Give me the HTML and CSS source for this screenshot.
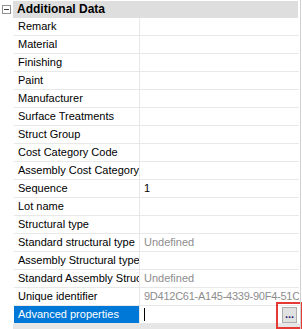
FILE: index.html
```html
<!DOCTYPE html>
<html>
<head>
<meta charset="utf-8">
<link rel="stylesheet" href="styles.css">
</head>
<body>
<div class="grid">
  <div class="header">
    <div class="gutter"><span class="expander"><span class="minus"></span></span></div>
    <div class="header-cell">Additional Data</div>
  </div>
  <div class="row"><div class="gutter"></div><div class="label">Remark</div><div class="value"></div></div>
  <div class="row"><div class="gutter"></div><div class="label">Material</div><div class="value"></div></div>
  <div class="row"><div class="gutter"></div><div class="label">Finishing</div><div class="value"></div></div>
  <div class="row"><div class="gutter"></div><div class="label">Paint</div><div class="value"></div></div>
  <div class="row"><div class="gutter"></div><div class="label">Manufacturer</div><div class="value"></div></div>
  <div class="row"><div class="gutter"></div><div class="label">Surface Treatments</div><div class="value"></div></div>
  <div class="row"><div class="gutter"></div><div class="label">Struct Group</div><div class="value"></div></div>
  <div class="row"><div class="gutter"></div><div class="label">Cost Category Code</div><div class="value"></div></div>
  <div class="row"><div class="gutter"></div><div class="label">Assembly Cost Category</div><div class="value"></div></div>
  <div class="row"><div class="gutter"></div><div class="label">Sequence</div><div class="value">1</div></div>
  <div class="row"><div class="gutter"></div><div class="label">Lot name</div><div class="value"></div></div>
  <div class="row"><div class="gutter"></div><div class="label">Structural type</div><div class="value"></div></div>
  <div class="row"><div class="gutter"></div><div class="label">Standard structural type</div><div class="value muted">Undefined</div></div>
  <div class="row"><div class="gutter"></div><div class="label">Assembly Structural type</div><div class="value"></div></div>
  <div class="row"><div class="gutter"></div><div class="label">Standard Assembly Structural type</div><div class="value muted">Undefined</div></div>
  <div class="row"><div class="gutter"></div><div class="label">Unique identifier</div><div class="value muted uid">9D412C61-A145-4339-90F4-51C0E2A7B3D8</div></div>
  <div class="row selected"><div class="gutter"></div><div class="label">Advanced properties</div><div class="value editing"><span class="caret"></span><span class="dots-btn">...</span></div></div>
  <div class="footer"><div class="gutter"></div><div class="footer-bar"></div></div>
  <div class="highlight"></div>
</div>
</body>
</html>
```
FILE: styles.css
```css
html, body {
  margin: 0;
  padding: 0;
  background: #ffffff;
}
body {
  font-family: "Liberation Sans", Arial, sans-serif;
  font-size: 11px;
  color: #000000;
}
.grid {
  position: relative;
  width: 302px;
  height: 329px;
  overflow: hidden;
}
.grid::after {
  content: "";
  position: absolute;
  top: 0;
  right: 1px;
  width: 1px;
  height: 329px;
  background: #d0d0d0;
}
.header {
  display: flex;
  height: 17px;
  margin-top: 1px;
}
.gutter {
  width: 13px;
  flex: none;
  background: #ffffff;
  display: flex;
  align-items: flex-start;
}
.expander {
  margin: 4px 0 0 2px;
  width: 7px;
  height: 7px;
  border: 1px solid #919191;
  background: #ffffff;
  position: relative;
}
.minus {
  position: absolute;
  left: 1px;
  top: 3px;
  width: 5px;
  height: 1px;
  background: #3c3c3c;
}
.header-cell {
  width: 285px;
  flex: none;
  background: #dedede;
  font-weight: bold;
  line-height: 17px;
  padding-left: 4px;
  box-sizing: border-box;
  font-size: 12px;
}
.row {
  display: flex;
  height: 18px;
}
.row .label {
  width: 126px;
  flex: none;
  box-sizing: border-box;
  padding-left: 4px;
  line-height: 17px;
  border-bottom: 1px solid #e8e8e8;
  border-right: 1px solid #e8e8e8;
  margin-left: 1px;
  white-space: nowrap;
  overflow: hidden;
}
.row .value {
  width: 159px;
  flex: none;
  box-sizing: border-box;
  padding-left: 4px;
  line-height: 17px;
  border-bottom: 1px solid #e8e8e8;
  white-space: nowrap;
  overflow: hidden;
  position: relative;
}
.muted {
  color: #8d8d8d;
}
.uid {
  letter-spacing: -0.25px;
}
.selected .label {
  background: #0078d7;
  color: #ffffff;
}
.caret {
  position: absolute;
  left: 4px;
  top: 2px;
  width: 1px;
  height: 13px;
  background: #000000;
}
.dots-btn {
  position: absolute;
  right: 2px;
  top: 1px;
  width: 13px;
  height: 14px;
  border: 1px solid #adadad;
  background: #e1e1e1;
  color: #1a1a6e;
  font-size: 11px;
  font-weight: bold;
  line-height: 12px;
  text-align: center;
}
.footer {
  display: flex;
  height: 6px;
}
.footer-bar {
  flex: 1;
  background: #e6e6e6;
}
.highlight {
  position: absolute;
  left: 276px;
  top: 302px;
  width: 22px;
  height: 23px;
  border: 2px solid #e53935;
}
```
